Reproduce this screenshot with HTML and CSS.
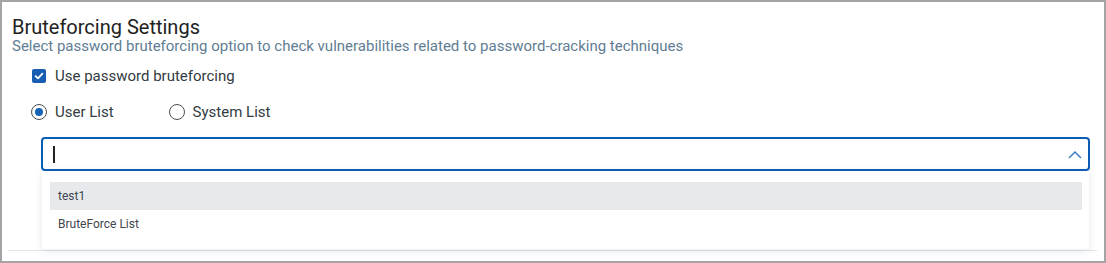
FILE: index.html
```html
<!DOCTYPE html>
<html>
<head>
<meta charset="utf-8">
<link rel="stylesheet" href="styles.css">
</head>
<body>
<div class="frame">
  <div class="section">
    <h2 class="title">Bruteforcing Settings</h2>
    <p class="subtitle">Select password bruteforcing option to check vulnerabilities related to password-cracking techniques</p>
    <div class="check-row">
      <span class="checkbox">
        <svg width="10" height="10" viewBox="0 0 10 10"><path d="M1.6 5.2 L4 7.4 L8.4 2.6" fill="none" stroke="#fff" stroke-width="1.8" stroke-linecap="round" stroke-linejoin="round"/></svg>
      </span>
      <span class="label">Use password bruteforcing</span>
    </div>
    <div class="radio-row">
      <div class="radio-option">
        <span class="radio checked"><span class="dot"></span></span>
        <span class="label">User List</span>
      </div>
      <div class="radio-option">
        <span class="radio"></span>
        <span class="label">System List</span>
      </div>
    </div>
    <div class="select-wrap">
      <div class="select">
        <span class="caret"></span>
        <svg class="chevron" width="14" height="9" viewBox="0 0 14 9"><path d="M1 8 L7 2 L13 8" fill="none" stroke="#3d7bc6" stroke-width="1.5"/></svg>
      </div>
      <div class="menu">
        <div class="item active">test1</div>
        <div class="item">BruteForce List</div>
      </div>
    </div>
  </div>
</div>
</body>
</html>
```
FILE: styles.css
```css
html, body {
  margin: 0;
  padding: 0;
  background: #ffffff;
}
body {
  font-family: Roboto, "Liberation Sans", Arial, sans-serif;
}
.frame {
  width: 1106px;
  height: 263px;
  box-sizing: border-box;
  border: 2px solid #a4a4a4;
  overflow: hidden;
}
.section {
  margin: 0 7px 0 6px;
  height: 249px;
  box-sizing: border-box;
  border-bottom: 1px solid #e3e6e9;
  padding: 14px 4px 0 4px;
}
.title {
  margin: 0;
  font-size: 20px;
  line-height: 22px;
  font-weight: 400;
  color: #222222;
}
.subtitle {
  margin: 0;
  font-size: 15px;
  line-height: 17px;
  color: #5f7d93;
}
.check-row {
  display: flex;
  align-items: center;
  margin: 13px 0 0 20px;
  height: 16px;
}
.checkbox {
  width: 14px;
  height: 14px;
  border-radius: 2px;
  background: #175db1;
  display: flex;
  align-items: center;
  justify-content: center;
  margin-right: 9px;
}
.label {
  font-size: 15px;
  line-height: 17px;
  color: #333b42;
}
.radio-row {
  display: flex;
  align-items: center;
  margin: 19px 0 0 19px;
  height: 18px;
  gap: 55px;
}
.radio-option {
  display: flex;
  align-items: center;
}
.radio {
  width: 16px;
  height: 16px;
  box-sizing: border-box;
  border: 1.5px solid #4b4f54;
  border-radius: 50%;
  display: flex;
  align-items: center;
  justify-content: center;
  margin-right: 8px;
}
.radio .dot {
  width: 8px;
  height: 8px;
  border-radius: 50%;
  background: #1763b8;
}
.select-wrap {
  position: relative;
  margin: 16px 3px 0 29px;
}
.select {
  height: 34px;
  box-sizing: border-box;
  border: 2px solid #0b5cb5;
  border-radius: 4px;
  display: flex;
  align-items: center;
  justify-content: space-between;
  padding: 0 6px 0 10px;
}
.caret {
  width: 2px;
  height: 17px;
  background: #222;
}
.chevron {
  margin-top: 1px;
}
.menu {
  position: absolute;
  left: 1px;
  right: 1px;
  top: 34px;
  background: #fff;
  border-radius: 0 0 4px 4px;
  box-shadow: 0 2px 8px rgba(60, 80, 110, 0.14);
  padding: 11px 7px 11px 8px;
}
.item {
  height: 28px;
  line-height: 28px;
  font-size: 12px;
  color: #3f464d;
  padding-left: 8px;
}
.item.active {
  background: #e6eaed;
}
```
